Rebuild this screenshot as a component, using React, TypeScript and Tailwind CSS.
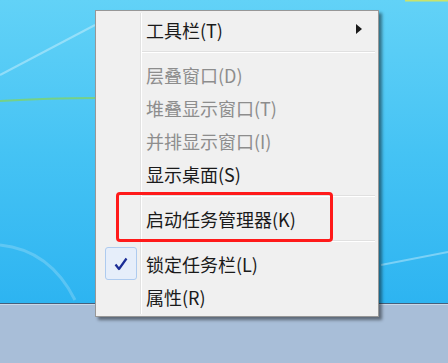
import React from "react";

type Item =
  | { kind: "item"; label: string; disabled?: boolean; checked?: boolean; submenu?: boolean }
  | { kind: "sep" };

const items: Item[] = [
  { kind: "item", label: "工具栏(T)", submenu: true },
  { kind: "sep" },
  { kind: "item", label: "层叠窗口(D)", disabled: true },
  { kind: "item", label: "堆叠显示窗口(T)", disabled: true },
  { kind: "item", label: "并排显示窗口(I)", disabled: true },
  { kind: "item", label: "显示桌面(S)" },
  { kind: "sep" },
  { kind: "item", label: "启动任务管理器(K)" },
  { kind: "sep" },
  { kind: "item", label: "锁定任务栏(L)", checked: true },
  { kind: "item", label: "属性(R)" },
];

function Desktop() {
  return (
    <div className="relative h-[303px] bg-gradient-to-b from-[#62d2f7] via-[#45c3f4] to-[#2db4f1]">
      {/* wallpaper streaks */}
      <svg className="absolute inset-0" width="448" height="303" viewBox="0 0 448 303">
        <path d="M0 75 L95 25" stroke="#ffffff" strokeOpacity="0.35" strokeWidth="2" fill="none" />
        <path d="M0 101 Q50 98 95 98" stroke="#7ed36b" strokeOpacity="0.8" strokeWidth="2" fill="none" />
        <path d="M0 245 Q50 250 75 300" stroke="#ffffff" strokeOpacity="0.2" strokeWidth="3" fill="none" />
        <path d="M381 265 L448 252" stroke="#ffffff" strokeOpacity="0.35" strokeWidth="2" fill="none" />
        <path d="M405 0 L448 0" stroke="#c9e36b" strokeWidth="3" fill="none" />
      </svg>
    </div>
  );
}

function Check() {
  return (
    <div className="flex h-[33px] w-[32px] items-center justify-center rounded-[3px] border border-[#aecbef] bg-[#e6eefa]">
      <svg width="14" height="14" viewBox="0 0 14 14">
        <path d="M1.5 7.5 L5 12 L12.5 1.5" stroke="#1b2d96" strokeWidth="2.2" fill="none" strokeLinejoin="round" />
      </svg>
    </div>
  );
}

function ContextMenu() {
  return (
    <div className="absolute left-[95px] top-[10px] w-[284px] border border-[#979797] bg-[#f0f0f0] pt-[2px] pb-[3px] shadow-[3px_3px_3px_rgba(0,0,0,0.45)]">
      {/* gutter line */}
      <div className="absolute bottom-[2px] left-[44px] top-[2px] w-[2px] border-l border-[#e2e2e2] bg-[#ffffff]" />
      {items.map((it, i) =>
        it.kind === "sep" ? (
          <div key={i} className="flex h-[12px] items-center pl-[46px] pr-[3px]">
            <div className="h-[2px] w-full border-t border-[#e0e0e0] bg-[#ffffff]" />
          </div>
        ) : (
          <div key={i} className="relative flex h-[33px] items-center">
            <div className="flex w-[46px] items-center justify-center pl-[4px]">
              {it.checked && <Check />}
            </div>
            <span
              className={`pl-[4px] text-[18px] leading-none ${it.disabled ? "text-[#8d8d8d]" : "text-[#1a1a1a]"}`}
            >
              {it.label}
            </span>
            {it.submenu && (
              <svg className="absolute right-[16px] top-[11px]" width="6" height="10" viewBox="0 0 6 10">
                <path d="M0 0 L6 5 L0 10 Z" fill="#1a1a1a" />
              </svg>
            )}
          </div>
        )
      )}
    </div>
  );
}

export default function App() {
  return (
    <div
      className="relative h-[363px] w-[448px] overflow-hidden"
      style={{ fontFamily: '"Noto Sans CJK SC", "Liberation Sans", sans-serif' }}
    >
      <Desktop />
      <div className="h-[60px] border-t border-[#45607c] bg-[#a8bed8] shadow-[inset_0_1px_0_#c9d8e8]" />
      <ContextMenu />
      {/* highlight annotation */}
      <div className="absolute left-[116px] top-[192px] h-[50px] w-[217px] rounded-[4px] border-[3px] border-[#ff1a1a]" />
    </div>
  );
}
